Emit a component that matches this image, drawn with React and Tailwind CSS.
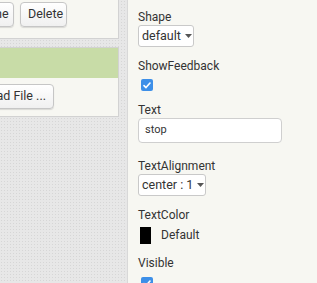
import React from 'react';

const Caret = () => (
  <svg width="7" height="4" viewBox="0 0 7 4" className="ml-[4px] shrink-0">
    <path d="M0 0h7L3.5 4z" fill="#555" />
  </svg>
);

const Checkbox = () => (
  <div className="w-[12px] h-[12px] rounded-[2px] bg-[#3d8fe8] flex items-center justify-center">
    <svg width="8" height="7" viewBox="0 0 8 7">
      <path d="M1 3.6l2 2 4-4.6" stroke="#fff" strokeWidth="1.6" fill="none" strokeLinecap="round" strokeLinejoin="round" />
    </svg>
  </div>
);

const Dropdown = ({ value, width }) => (
  <div className={`flex items-center h-[22px] ${width} pl-[3px] border border-[#c9c9c9] rounded-[3px] bg-white text-[12.5px] text-[#333] whitespace-nowrap`}>
    <span>{value}</span>
    <Caret />
  </div>
);

const Label = ({ children, className = '' }) => (
  <div className={`h-[16px] leading-[16px] text-[12px] text-[#333] ${className}`}>{children}</div>
);

const Button = ({ children, className = '' }) => (
  <button className={`shrink-0 h-[25px] px-[7px] border border-[#c6c6c6] rounded-[4px] bg-gradient-to-b from-white to-[#f0f0f0] shadow-[0_1px_1px_rgba(0,0,0,0.12)] text-[12.5px] text-[#333] whitespace-nowrap ${className}`}>
    {children}
  </button>
);

export default function App() {
  return (
    <div
      className="flex h-[283px] w-[317px] overflow-hidden bg-[#e7e7e7] bg-[radial-gradient(#d6d6d6_1px,transparent_1px)] bg-[size:3px_3px]"
      style={{ fontFamily: 'Roboto, "Liberation Sans", sans-serif' }}
    >
      <div className="w-[119px] flex flex-col shrink-0">
        <div className="h-[39px] bg-[#f7f7f2] border-r border-b border-[#d2d2d2] flex items-start pt-[2px] gap-[6px] overflow-hidden">
          <Button className="-ml-[45px] w-[59px]">Rename</Button>
          <Button className="w-[47px]">Delete</Button>
        </div>
        <div className="mt-[8px] border-r border-b border-t border-[#d2d2d2]">
          <div className="h-[30px] bg-[#c8dca7]" />
          <div className="h-[38px] bg-[#f7f7f2] flex items-start pt-[6px] overflow-hidden">
            <Button className="-ml-[46px] w-[100px] text-right">Upload File ...</Button>
          </div>
        </div>
      </div>
      <div className="ml-[8px] flex-1 bg-[#f7f7f2] border-l border-[#d8d8d8] pl-[10px] pt-[9px]">
        <Label>Shape</Label>
        <Dropdown value="default" width="w-[56px]" />
        <Label className="mt-[11px]">ShowFeedback</Label>
        <div className="mt-[5px] ml-[3px]"><Checkbox /></div>
        <Label className="mt-[11px]">Text</Label>
        <div className="w-[144px] h-[25px] border border-[#cfcfcf] rounded-[4px] bg-white flex items-center pl-[6px] text-[11px] text-[#333]">
          stop
        </div>
        <Label className="mt-[15px]">TextAlignment</Label>
        <Dropdown value="center : 1" width="w-[68px]" />
        <Label className="mt-[11px]">TextColor</Label>
        <div className="mt-[3px] flex items-center">
          <div className="ml-[2px] w-[11px] h-[17px] bg-black" />
          <span className="ml-[10px] text-[12px] text-[#333]">Default</span>
        </div>
        <Label className="mt-[11px]">Visible</Label>
        <div className="mt-[6px] ml-[3px]"><Checkbox /></div>
      </div>
    </div>
  );
}
